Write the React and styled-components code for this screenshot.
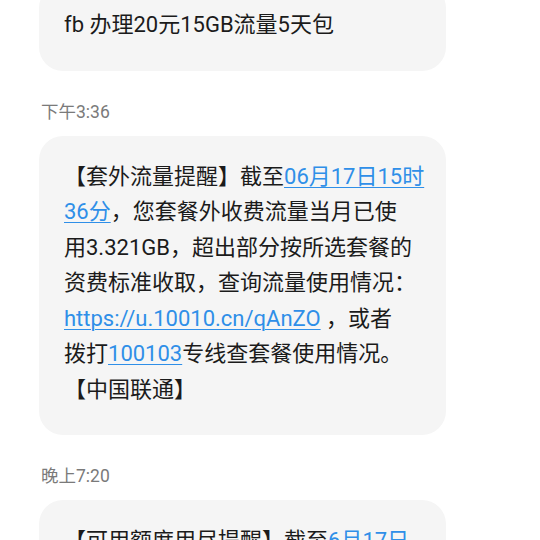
import React from 'react';
import styled, { createGlobalStyle } from 'styled-components';

const GlobalStyle = createGlobalStyle`
  html, body {
    margin: 0;
    padding: 0;
    background: #ffffff;
    overflow: hidden;
  }
  body {
    font-family: Roboto, "Noto Sans CJK SC", sans-serif;
  }
`;

const Thread = styled.div`
  width: 540px;
  height: 540px;
  overflow: hidden;
`;

// the list is scrolled so the first bubble is partly out of view
const List = styled.div`
  display: flex;
  flex-direction: column;
  align-items: flex-start;
  padding: 0 0 0 39px;
  margin-top: -16px;
`;

const Time = styled.div`
  margin: 29px 0 12px 2px;
  font-size: 17.5px;
  line-height: 24px;
  color: #7a7a7a;
`;

const Bubble = styled.div`
  box-sizing: border-box;
  width: 407px;
  padding: 23px 25px 28px 25px;
  background: #f5f5f5;
  border-radius: 24px;
  color: #1b1b1b;
  font-size: 22px;
  line-height: 35.5px;
`;

const Line = styled.div`
  white-space: nowrap;
`;

const Link = styled.span`
  color: #2f8fe8;
  text-decoration: underline;
  text-underline-offset: 3px;
  text-decoration-thickness: 1px;
`;

const App = () => {
  return (
    <Thread>
      <GlobalStyle />
      <List>
        <Bubble>
          <Line>fb 办理20元15GB流量5天包</Line>
        </Bubble>

        <Time>下午3:36</Time>
        <Bubble>
          <Line>【套外流量提醒】截至<Link>06月17日15时</Link></Line>
          <Line><Link>36分</Link>，您套餐外收费流量当月已使</Line>
          <Line>用3.321GB，超出部分按所选套餐的</Line>
          <Line>资费标准收取，查询流量使用情况：</Line>
          <Line><Link>https://u.10010.cn/qAnZO</Link> ，或者</Line>
          <Line>拨打<Link>100103</Link>专线查套餐使用情况。</Line>
          <Line>【中国联通】</Line>
        </Bubble>

        <Time>晚上7:20</Time>
        <Bubble>
          <Line>【可用额度用尽提醒】截至<Link>6月17日</Link></Line>
          <Line>&nbsp;</Line>
        </Bubble>
      </List>
    </Thread>
  );
};

export default App;
